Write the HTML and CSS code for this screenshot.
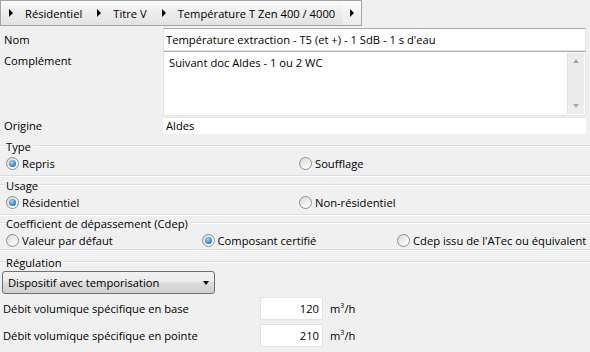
FILE: index.html
```html
<!DOCTYPE html>
<html lang="fr">
<head>
  <meta charset="UTF-8">
  <title>Composant ventilation</title>
  <link rel="stylesheet" href="styles.css">
</head>
<body>

<div class="crumbs">
  <div class="crumb"><span class="tri"></span>Résidentiel</div>
  <div class="crumb"><span class="tri"></span>Titre V</div>
  <div class="crumb"><span class="tri"></span>Température T Zen 400 / 4000</div>
  <div class="crumb last"><span class="tri"></span></div>
</div>

<div class="fields">
  <label class="lbl">Nom</label>
  <input class="box" type="text" value="Température extraction - T5 (et +) - 1 SdB - 1 s d'eau">

  <label class="lbl top">Complément</label>
  <div class="memo">
    <div class="memo-text">Suivant doc Aldes - 1 ou 2 WC</div>
    <div class="vscroll">
      <span class="up"></span>
      <span class="down"></span>
    </div>
  </div>

  <label class="lbl">Origine</label>
  <input class="box short" type="text" value="Aldes">
</div>

<div class="group first">
  <div class="group-title">Type</div>
  <div class="options">
    <div class="radio"><span class="dot on"></span>Repris</div>
    <div class="radio"><span class="dot"></span>Soufflage</div>
  </div>
</div>

<div class="group">
  <div class="group-title">Usage</div>
  <div class="options">
    <div class="radio"><span class="dot on"></span>Résidentiel</div>
    <div class="radio"><span class="dot"></span>Non-résidentiel</div>
  </div>
</div>

<div class="group tight">
  <div class="group-title">Coefficient de dépassement (Cdep)</div>
  <div class="options three">
    <div class="radio"><span class="dot"></span>Valeur par défaut</div>
    <div class="radio"><span class="dot on"></span>Composant certifié</div>
    <div class="radio"><span class="dot"></span>Cdep issu de l'ATec ou équivalent</div>
  </div>
</div>

<div class="group open">
  <div class="group-title">Régulation</div>
  <div class="select">
    <span>Dispositif avec temporisation</span>
    <span class="caret"></span>
  </div>
  <div class="rate">
    <span>Débit volumique spécifique en base</span>
    <input class="num" type="text" value="120">
    <span>m<sup>3</sup>/h</span>
  </div>
  <div class="rate">
    <span>Débit volumique spécifique en pointe</span>
    <input class="num" type="text" value="210">
    <span>m<sup>3</sup>/h</span>
  </div>
</div>

</body>
</html>
```

FILE: styles.css
```css
* {
  box-sizing: border-box;
}

html, body {
  overflow: hidden;
}

body {
  margin: 0;
  background: #f0f0f0;
  font-family: "Open Sans", "Noto Sans", sans-serif;
  font-size: 11.2px;
  color: #000;
}

/* Breadcrumb bar */
.crumbs {
  display: inline-flex;
  height: 26px;
  border: 1px solid #a3a3a3;
  background: linear-gradient(#fbfbfb, #ececec 50%, #e2e2e2);
}

.crumb {
  display: flex;
  align-items: center;
  padding: 0 7px 0 8px;
  white-space: nowrap;
}

.crumb .tri {
  width: 0;
  height: 0;
  border-left: 4px solid #000;
  border-top: 4px solid transparent;
  border-bottom: 4px solid transparent;
  margin-right: 12px;
}

.crumb.last {
  background: linear-gradient(#fdfdfd, #f3f3f3 50%, #ebebeb);
}

.crumb.last .tri {
  margin-right: 0;
}

/* Name / complement / origin */
.fields {
  display: grid;
  grid-template-columns: 163px 423px;
  margin-top: 2px;
}

.lbl {
  padding-left: 4px;
  align-self: center;
}

.lbl.top {
  align-self: start;
  padding-top: 2px;
}

.box {
  height: 23px;
  margin: 0;
  padding: 0 2px;
  font: inherit;
  color: #000;
  background: #fff;
  border: 1px solid #e2e3ea;
  border-top-color: #abadb3;
  outline: none;
}

.box.short {
  height: 17px;
  margin-top: 1px;
  border-color: #fff;
  border-top-color: #e2e3ea;
}

.memo {
  display: flex;
  height: 65px;
  background: #fff;
  border: 1px solid #e2e3ea;
  border-top-color: #abadb3;
}

.memo-text {
  flex: 1;
  padding: 3px 5px;
}

.vscroll {
  width: 17px;
  margin: 1px 1px 1px 0;
  display: flex;
  flex-direction: column;
  justify-content: space-between;
  align-items: center;
  padding: 6px 0;
  background: #ececec;
  border-left: 1px solid #e0e0e0;
}

.vscroll .up, .vscroll .down {
  width: 0;
  height: 0;
  border-left: 3.5px solid transparent;
  border-right: 3.5px solid transparent;
}

.vscroll .up {
  border-bottom: 4px solid #a9a9a9;
}

.vscroll .down {
  border-top: 4px solid #a9a9a9;
}

/* Group boxes */
.group {
  margin-top: 1px;
  padding-bottom: 3px;
  border-bottom: 1px solid #d5dfe5;
  box-shadow: 0 1px 0 #fff;
}

.group.first {
  margin-top: 4px;
}

.group.tight {
  margin-top: 0;
  padding-bottom: 0;
}

.group.open {
  margin-top: 4px;
  border-bottom: none;
  box-shadow: none;
}

.group-title {
  display: flex;
  align-items: center;
  height: 16px;
  white-space: nowrap;
}

.group-title::before,
.group-title::after {
  content: "";
  border-top: 1px solid #d5dfe5;
  border-bottom: 1px solid #fff;
}

.group-title::before {
  width: 5px;
  margin-right: 1px;
}

.group-title::after {
  flex: 1;
  margin-left: 2px;
}

.options {
  display: grid;
  grid-template-columns: 293px 1fr;
  align-items: center;
  height: 18px;
  padding-left: 6px;
}

.options.three {
  grid-template-columns: 195.5px 195.5px 1fr;
}

.radio {
  display: flex;
  align-items: center;
  gap: 3px;
  white-space: nowrap;
}

.dot {
  position: relative;
  width: 13px;
  height: 13px;
  border-radius: 50%;
  border: 1px solid #8e8f8f;
  background: linear-gradient(135deg, #d6d6d6, #f8f8f8 70%, #fff);
}

.dot.on::after {
  content: "";
  position: absolute;
  left: 2px;
  top: 2px;
  width: 7px;
  height: 7px;
  border-radius: 50%;
  background: radial-gradient(circle at 40% 35%, #a8dcfa, #3d8fcf 55%, #1b4f7c);
}

/* Regulation */
.select {
  display: flex;
  align-items: center;
  justify-content: space-between;
  width: 213px;
  height: 23px;
  margin: 1px 0 0 2px;
  padding: 0 5px 0 5px;
  border: 1px solid #707070;
  border-radius: 3px;
  background: linear-gradient(#f2f2f2, #ebebeb 50%, #dddddd 50%, #cfcfcf);
}

.caret {
  width: 0;
  height: 0;
  border-top: 4px solid #000;
  border-left: 3.5px solid transparent;
  border-right: 3.5px solid transparent;
}

.rate {
  display: grid;
  grid-template-columns: 257px 56px auto;
  column-gap: 7px;
  align-items: center;
  margin-top: 3px;
  padding-left: 3px;
}

.rate + .rate {
  margin-top: 4px;
}

.rate .num {
  grid-column: 2;
  height: 23px;
  margin: 0 0 0 -7px;
  padding: 0 3px;
  font: inherit;
  text-align: right;
  background: #fff;
  border: 1px solid #dfe3e8;
  outline: none;
}

.rate sup {
  font-size: 7px;
}
```
